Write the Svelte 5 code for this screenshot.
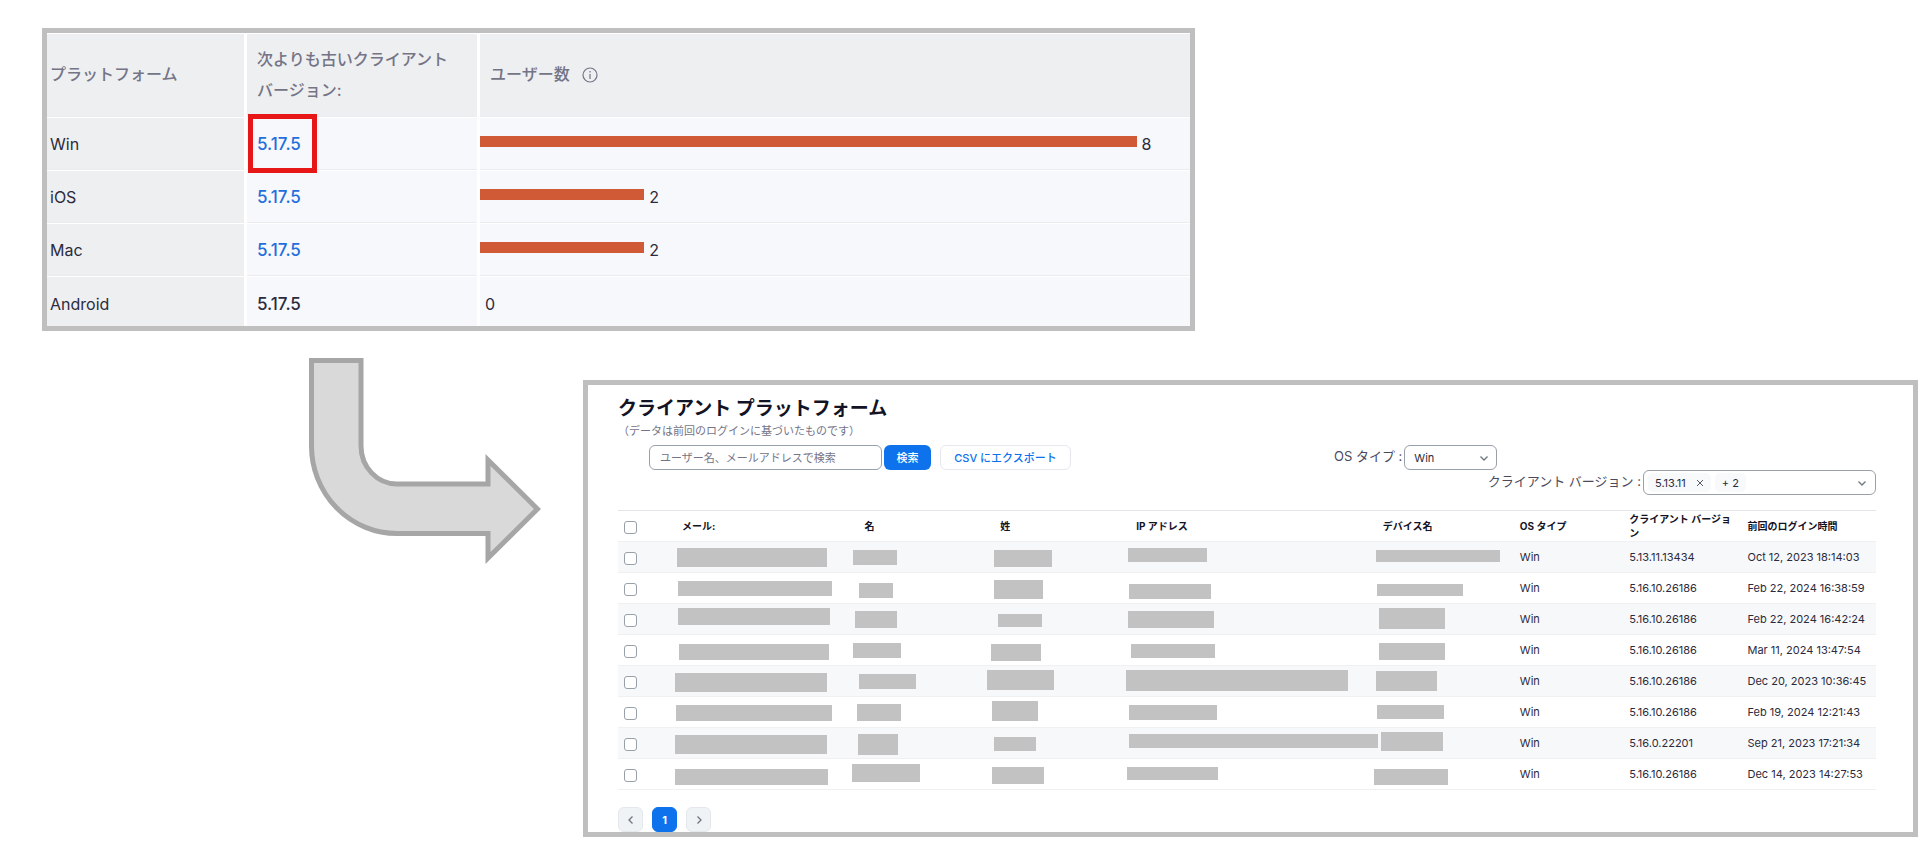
<script lang="ts">
  interface Platform {
    name: string;
    version: string;
    users: number;
    linked: boolean;
    marked?: boolean;
  }

  // Redacted value: left, top, width, height inside its cell
  type Mask = [number, number, number, number];

  interface Login {
    masks: Mask[];
    os: string;
    version: string;
    time: string;
  }

  const platforms: Platform[] = [
    { name: 'Win', version: '5.17.5', users: 8, linked: true, marked: true },
    { name: 'iOS', version: '5.17.5', users: 2, linked: true },
    { name: 'Mac', version: '5.17.5', users: 2, linked: true },
    { name: 'Android', version: '5.17.5', users: 0, linked: false },
  ];

  const maxUsers = Math.max(...platforms.map((p) => p.users));
  const barWidth = (users: number) => `${(users / maxUsers) * 92.5}%`;

  const columns = [
    'メール:',
    '名',
    '姓',
    'IP アドレス',
    'デバイス名',
    'OS タイプ',
    'クライアント バージョン',
    '前回のログイン時間',
  ];

  const logins: Login[] = [
    {
      masks: [[11, 6, 150, 19], [5, 8, 44, 15], [10, 8, 58, 17], [8, 6, 79, 14], [9, 8, 124, 12]],
      os: 'Win',
      version: '5.13.11.13434',
      time: 'Oct 12, 2023 18:14:03',
    },
    {
      masks: [[12, 8, 154, 15], [11, 10, 34, 15], [10, 7, 49, 19], [9, 11, 82, 15], [10, 11, 86, 12]],
      os: 'Win',
      version: '5.16.10.26186',
      time: 'Feb 22, 2024 16:38:59',
    },
    {
      masks: [[12, 4, 152, 17], [7, 7, 42, 17], [14, 10, 44, 13], [8, 7, 86, 17], [12, 4, 66, 21]],
      os: 'Win',
      version: '5.16.10.26186',
      time: 'Feb 22, 2024 16:42:24',
    },
    {
      masks: [[13, 9, 150, 16], [5, 8, 48, 15], [7, 9, 50, 17], [11, 9, 84, 14], [12, 8, 66, 17]],
      os: 'Win',
      version: '5.16.10.26186',
      time: 'Mar 11, 2024 13:47:54',
    },
    {
      masks: [[9, 7, 152, 19], [11, 8, 57, 15], [3, 4, 67, 20], [6, 4, 222, 21], [9, 5, 61, 20]],
      os: 'Win',
      version: '5.16.10.26186',
      time: 'Dec 20, 2023 10:36:45',
    },
    {
      masks: [[10, 8, 156, 16], [9, 7, 44, 17], [8, 4, 46, 20], [9, 8, 88, 15], [10, 8, 67, 14]],
      os: 'Win',
      version: '5.16.10.26186',
      time: 'Feb 19, 2024 12:21:43',
    },
    {
      masks: [[9, 7, 152, 19], [10, 6, 40, 21], [10, 9, 42, 14], [9, 6, 249, 14], [14, 4, 62, 19]],
      os: 'Win',
      version: '5.16.0.22201',
      time: 'Sep 21, 2023 17:21:34',
    },
    {
      masks: [[9, 10, 153, 16], [4, 5, 68, 18], [8, 8, 52, 17], [7, 8, 91, 13], [7, 10, 74, 16]],
      os: 'Win',
      version: '5.16.10.26186',
      time: 'Dec 14, 2023 14:27:53',
    },
  ];

  let query = $state('');
  let selected: boolean[] = $state(logins.map(() => false));
  const allSelected = $derived(selected.every(Boolean));
</script>

{#snippet chevron(d: string)}
  <svg class="chevron" viewBox="0 0 10 10" width="10" height="10" aria-hidden="true">
    <path {d} />
  </svg>
{/snippet}

<main>
  <section class="panel overview">
    <table class="platforms">
      <thead>
        <tr>
          <th class="name">プラットフォーム</th>
          <th class="version">次よりも古いクライアント バージョン:</th>
          <th class="users">
            <span class="users-title">
              ユーザー数
              <svg viewBox="0 0 16 16" width="16" height="16" aria-hidden="true">
                <circle cx="8" cy="8" r="7" />
                <path d="M8 7v5M8 4v1.5" />
              </svg>
            </span>
          </th>
        </tr>
      </thead>
      <tbody>
        {#each platforms as platform}
          <tr>
            <th class="name">{platform.name}</th>
            <td class="version" class:marked={platform.marked}>
              {#if platform.linked}
                <a href="#clients">{platform.version}</a>
              {:else}
                {platform.version}
              {/if}
            </td>
            <td class="users">
              <div class="meter">
                <span class="bar" style:width={barWidth(platform.users)}></span>
                <span>{platform.users}</span>
              </div>
            </td>
          </tr>
        {/each}
      </tbody>
    </table>
  </section>

  <div class="detail">
    <svg class="arrow" viewBox="0 0 232 210" width="232" height="210" aria-hidden="true">
      <path
        d="M2.5 2.5H52V88A36 38 0 0 0 88 126H179V102L228.5 151L179 200V175.5H88A85.5 87.5 0 0 1 2.5 88Z"
      />
    </svg>

    <section class="panel clients" id="clients">
      <h1>クライアント プラットフォーム</h1>
      <p class="note">（データは前回のログインに基づいたものです）</p>

      <div class="toolbar">
        <form class="search" onsubmit={(e) => e.preventDefault()}>
          <input
            type="text"
            aria-label="検索"
            placeholder="ユーザー名、メールアドレスで検索"
            bind:value={query}
          />
          <button class="primary" type="submit">検索</button>
          <button class="export" type="button">CSV にエクスポート</button>
        </form>
        <div class="filter">
          <label for="os-type">OS タイプ :</label>
          <div class="select">
            <select id="os-type">
              <option>Win</option>
            </select>
            {@render chevron('M1.5 3.5L5 7L8.5 3.5')}
          </div>
        </div>
      </div>

      <div class="filter">
        <span id="version-label">クライアント バージョン :</span>
        <div class="multiselect" role="group" aria-labelledby="version-label">
          <span class="chip">
            5.13.11
            <button type="button" aria-label="5.13.11 ×">
              <svg viewBox="0 0 8 8" width="8" height="8" aria-hidden="true">
                <path d="M1 1L7 7M7 1L1 7" />
              </svg>
            </button>
          </span>
          <span class="chip">+ 2</span>
          {@render chevron('M1.5 3.5L5 7L8.5 3.5')}
        </div>
      </div>

      <table class="logins">
        <colgroup>
          <col class="c-check" />
          <col class="c-mail" />
          <col class="c-given" />
          <col class="c-family" />
          <col class="c-ip" />
          <col class="c-device" />
          <col class="c-os" />
          <col class="c-version" />
          <col class="c-time" />
        </colgroup>
        <thead>
          <tr>
            <th class="check">
              <input
                type="checkbox"
                aria-label="すべて"
                checked={allSelected}
                onchange={(e) => (selected = logins.map(() => e.currentTarget.checked))}
              />
            </th>
            {#each columns as column}
              <th>{column}</th>
            {/each}
          </tr>
        </thead>
        <tbody>
          {#each logins as login, i}
            <tr>
              <td class="check">
                <input type="checkbox" aria-label={login.time} bind:checked={selected[i]} />
              </td>
              {#each login.masks as [left, top, width, height]}
                <td class="masked">
                  <span
                    class="mask"
                    style:margin="{top}px 0 0 {left}px"
                    style:width="{width}px"
                    style:height="{height}px"
                  ></span>
                </td>
              {/each}
              <td>{login.os}</td>
              <td>{login.version}</td>
              <td>{login.time}</td>
            </tr>
          {/each}
        </tbody>
      </table>

      <nav class="pager">
        <button type="button" aria-label="前へ">{@render chevron('M6.5 1.5L3 5L6.5 8.5')}</button>
        <button type="button" class="current">1</button>
        <button type="button" aria-label="次へ">{@render chevron('M3.5 1.5L7 5L3.5 8.5')}</button>
      </nav>
    </section>
  </div>
</main>

<style>
  :global(body) {
    background: #fff;
  }

  main {
    padding: 28px 0 4px 42px;
    color: #2b2b3d;
    font-family: Inter, 'Noto Sans CJK JP', sans-serif;
  }

  button,
  input,
  select {
    box-sizing: border-box;
    margin: 0;
    font-family: inherit;
  }

  .panel {
    box-sizing: border-box;
    border: 5px solid #bfbfbf;
    background: #fff;
  }

  /* Platform overview */
  .overview {
    width: 61.45%;
    padding-top: 1px;
  }

  .platforms {
    width: 100%;
    border-spacing: 0;
    table-layout: fixed;
    font-size: 16px;

    & th,
    & td {
      box-sizing: border-box;
      height: 53px;
      padding: 0;
      border-right: 3px solid #fff;
      border-bottom: 1px solid #fff;
      background: #f7f8fb;
      box-shadow: inset 0 -1px #ebecf0;
      font-weight: 400;
      text-align: left;
    }

    & .name {
      width: 200px;
      padding-left: 3px;
      background: #eeeff1;
    }

    & .version {
      width: 233px;
      padding-left: 10px;
    }

    & tbody .version {
      font-size: 17px;
      font-weight: 500;
    }

    & thead th {
      height: 84px;
      padding-bottom: 2px;
      background: #eeeff1;
      color: #747487;
      font-weight: 500;
      line-height: 31px;
    }

    & thead .version {
      padding-right: 24px;
    }

    & .users {
      border-right: none;
    }

    & tbody tr:last-child > * {
      height: 49px;
      padding-top: 4px;
      border-bottom: none;
      box-shadow: none;
    }

    & a {
      color: #1f6fdc;
      text-decoration: none;
    }
  }

  .users-title {
    display: flex;
    align-items: center;
    gap: 12px;
    padding-left: 10px;

    & svg {
      fill: none;
      stroke: #747487;
      stroke-width: 1.2;
    }
  }

  .meter {
    display: flex;
    align-items: center;
    gap: 5px;
  }

  .bar {
    height: 11px;
    margin-bottom: 6px;
    background: #cf5a35;
  }

  .marked {
    position: relative;

    &::after {
      content: '';
      position: absolute;
      top: -4px;
      left: 1px;
      width: 59px;
      height: 49px;
      border: 5px solid #e81717;
    }
  }

  /* Client list */
  .detail {
    display: flex;
    align-items: flex-start;
    gap: 42px;
    margin-top: 27px;
    padding-left: 267px;
  }

  .arrow {
    flex: none;
    fill: #d9d9d9;
    stroke: #a6a6a6;
    stroke-width: 5;
  }

  .clients {
    flex: 1;
    min-width: 0;
    margin-top: 22px;
    padding: 10px 37px 0 30px;
  }

  h1 {
    margin: 0;
    color: #131326;
    font-size: 19px;
    font-weight: 700;
    line-height: 28px;
  }

  .note {
    margin: 0;
    color: #747487;
    font-size: 11px;
    line-height: 16px;
  }

  .toolbar {
    display: flex;
    justify-content: space-between;
    margin-top: 6px;
    padding: 0 30.1% 0 31px;
  }

  .search {
    display: flex;

    & input {
      width: 233px;
      height: 25px;
      padding: 0 10px;
      border: 1px solid #98a0a9;
      border-radius: 6px;
      font-size: 11px;
    }

    & input::placeholder {
      color: #747487;
      opacity: 1;
    }

    & button {
      height: 25px;
      padding: 0 0 2px;
      border-radius: 6px;
      font-size: 11px;
      font-weight: 500;
    }

    & .primary {
      width: 47px;
      margin-left: 2px;
      border: none;
      background: #0e72ed;
      color: #fff;
    }

    & .export {
      width: 131px;
      margin-left: 9px;
      border: 1px solid #e6e8ee;
      background: #fff;
      color: #0e72ed;
    }
  }

  .filter {
    display: flex;
    justify-content: flex-end;
    gap: 2px;
    color: #4a4a5c;
    font-size: 13px;
    line-height: 22px;
  }

  .select {
    display: grid;
    align-items: center;

    & > * {
      grid-area: 1 / 1;
    }

    & select {
      width: 93px;
      height: 25px;
      padding: 0 9px;
      border: 1px solid #98a0a9;
      border-radius: 6px;
      appearance: none;
      background: #fff;
      color: #2b2b3d;
      font-size: 11px;
    }

    & .chevron {
      justify-self: end;
      margin-right: 8px;
      pointer-events: none;
    }
  }

  .multiselect {
    display: flex;
    align-items: center;
    gap: 4px;
    box-sizing: border-box;
    width: 233px;
    height: 25px;
    padding: 0 8px 0 4px;
    border: 1px solid #98a0a9;
    border-radius: 6px;
    color: #2b2b3d;
    font-size: 11px;

    & .chevron {
      margin-left: auto;
    }
  }

  .chip {
    display: flex;
    align-items: center;
    gap: 10px;
    height: 19px;
    padding: 0 7px;
    border-radius: 5px;
    background: #f7f9fa;

    & button {
      display: flex;
      padding: 0;
      border: none;
      background: none;
    }

    & svg {
      stroke: #555b66;
    }
  }

  .chevron {
    fill: none;
    stroke: #6e7680;
    stroke-width: 1.3;
  }

  .logins {
    width: 100%;
    margin-top: 15px;
    border-top: 1px solid #e4e5e8;
    border-spacing: 0;
    table-layout: fixed;
    font-size: 11px;

    & th,
    & td {
      box-sizing: border-box;
      height: 31px;
      padding: 0 0 0 16px;
      border-bottom: 1px solid #eff0f2;
      line-height: 14px;
      text-align: left;
      white-space: nowrap;
    }

    & th {
      color: #131326;
      font-size: 10px;
      font-weight: 700;
      white-space: normal;
      word-break: break-all;
      line-break: anywhere;
    }

    & th:nth-last-child(2) {
      padding-right: 0;
    }

    & tbody tr:nth-child(odd) {
      background: #f7f8fa;
    }

    & .check {
      padding: 2px 0 0 6px;
    }

    & .masked {
      padding: 0;
      vertical-align: top;
    }

    & input {
      display: block;
      width: 13px;
      height: 13px;
      border: 1px solid #98a0a9;
      border-radius: 3px;
      appearance: none;
      background: #fff;

      &:checked {
        background: #0e72ed;
      }
    }
  }

  .mask {
    display: block;
    background: #c2c2c2;
  }

  .c-check {
    width: 48px;
  }

  .c-mail {
    width: 14.5%;
  }

  .c-given {
    width: 10.8%;
  }

  .c-family {
    width: 10.8%;
  }

  .c-ip {
    width: 19.6%;
  }

  .c-device {
    width: 10.9%;
  }

  .c-os {
    width: 8.7%;
  }

  .c-version {
    width: 9.4%;
  }

  .pager {
    display: flex;
    gap: 9px;
    margin-top: 17px;

    & button {
      display: flex;
      align-items: center;
      justify-content: center;
      width: 25px;
      height: 25px;
      padding: 0;
      border: 1px solid #e4e8ec;
      border-radius: 6px;
      background: #f0f3f6;
      font-size: 11px;
    }

    & .current {
      border-color: #0e72ed;
      background: #0e72ed;
      color: #fff;
      font-weight: 700;
    }
  }
</style>
